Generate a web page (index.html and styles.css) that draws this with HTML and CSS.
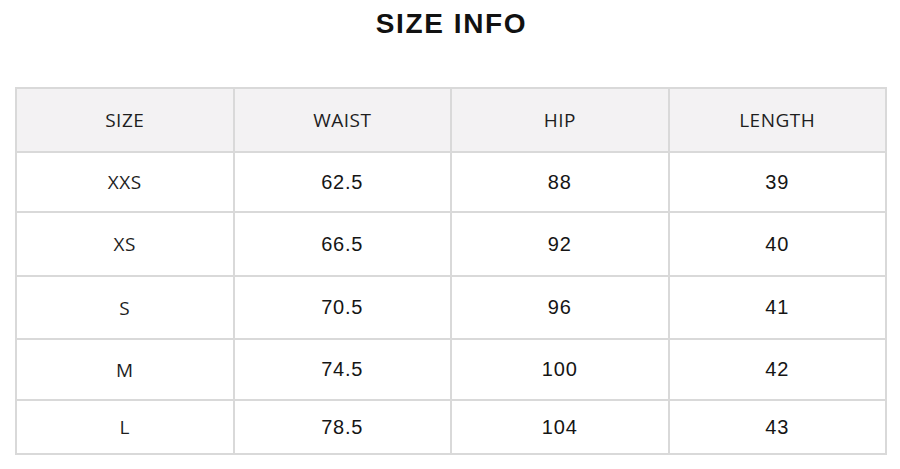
FILE: index.html
```html
<!DOCTYPE html>
<html>
<head>
<meta charset="utf-8">
<link rel="stylesheet" href="styles.css">
</head>
<body>
<h1 class="title">SIZE INFO</h1>
<table class="size-table">
  <thead>
    <tr class="row-head">
      <th class="label">SIZE</th>
      <th class="label">WAIST</th>
      <th class="label">HIP</th>
      <th class="label">LENGTH</th>
    </tr>
  </thead>
  <tbody>
    <tr class="row-a"><td class="label">XXS</td><td>62.5</td><td>88</td><td>39</td></tr>
    <tr class="row-b"><td class="label">XS</td><td>66.5</td><td>92</td><td>40</td></tr>
    <tr class="row-c"><td class="label">S</td><td>70.5</td><td>96</td><td>41</td></tr>
    <tr class="row-d"><td class="label">M</td><td>74.5</td><td>100</td><td>42</td></tr>
    <tr class="row-e"><td class="label">L</td><td>78.5</td><td>104</td><td>43</td></tr>
  </tbody>
</table>
</body>
</html>
```

FILE: styles.css
```css
html, body {
  margin: 0;
  padding: 0;
  background: #ffffff;
}
body {
  font-family: "Liberation Sans", Arial, sans-serif;
  color: #111;
}
.title {
  margin: 0 0 39px 0;
  font-size: 28px;
  line-height: 48px;
  font-weight: 700;
  letter-spacing: 1.6px;
  text-align: center;
  color: #111;
  padding-left: 3px;
}
.size-table {
  margin-left: 15px;
  width: 872px;
  border-collapse: separate;
  border-spacing: 0;
  border-top: 2px solid #d9d9d9;
  border-left: 2px solid #d9d9d9;
  table-layout: fixed;
}
.size-table th,
.size-table td {
  border-right: 2px solid #d9d9d9;
  border-bottom: 2px solid #d9d9d9;
  padding: 0;
  text-align: center;
  vertical-align: middle;
  font-weight: 400;
  font-family: "Liberation Sans", Arial, sans-serif;
  font-size: 20px;
  letter-spacing: 0.8px;
  color: #151515;
}
.size-table .label {
  font-family: "Open Sans", "Noto Sans", sans-serif;
  font-size: 19px;
  letter-spacing: 0.5px;
  color: #1e1e1e;
}
.size-table th {
  background: #f3f2f3;
}
.row-head { height: 64px; }
.row-a { height: 60px; }
.row-b { height: 64px; }
.row-c { height: 63px; }
.row-d { height: 61px; }
.row-e { height: 54px; }
```
